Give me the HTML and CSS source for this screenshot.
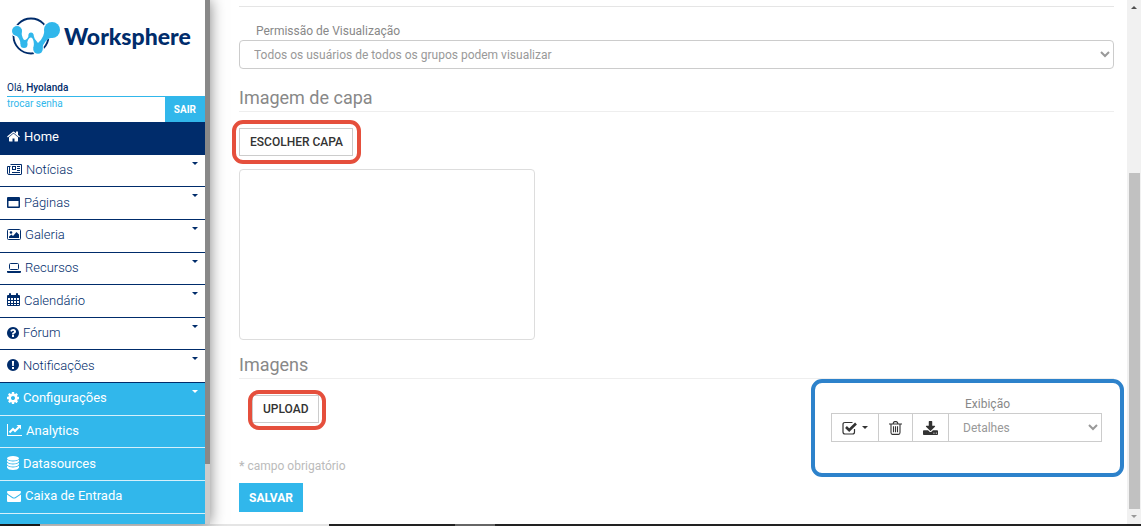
FILE: index.html
```
<!DOCTYPE html>
<html lang="pt-br">
<head>
    <meta charset="UTF-8">
    <meta name="viewport" content="width=device-width, initial-scale=1.0">
    <title>Worksphere - Galeria</title>
    <link rel="stylesheet" href="styles.css">
</head>
<body>

<div class="pagina">
    <aside class="lateral">
        <div class="lateral-conteudo">
            <a href="#" class="logo">
                <svg width="48" height="38" viewBox="0 0 48 38" aria-hidden="true">
                    <circle cx="19" cy="19" r="17.500" fill="none" stroke="#002c6b" stroke-width="1.800"/>
                    <g fill="#fff">
                        <circle cx="5" cy="14" r="6"/>
                        <circle cx="26" cy="32" r="6"/>
                        <circle cx="40" cy="13" r="9.500"/>
                    </g>
                    <path d="M2 17Q8 20 8.500 27L15 28Q15 22 19 20Q23 23 21.500 31L30 33Q31 22 42 20L33 9Q33 20 26 26Q22 22 21 17L17 17Q16 23 12 23Q9 19 9.500 12Z" fill="#31b7eb"/>
                    <circle cx="5" cy="14" r="5" fill="#31b7eb"/>
                    <circle cx="12" cy="27.500" r="3.500" fill="#31b7eb"/>
                    <circle cx="19" cy="18" r="2.500" fill="#31b7eb"/>
                    <circle cx="26" cy="32" r="4.800" fill="#31b7eb"/>
                    <circle cx="40" cy="13" r="8" fill="#31b7eb"/>
                </svg>
                <span>Worksphere</span>
            </a>

            <div class="usuario">
                <div class="saudacao">Olá, <strong>Hyolanda</strong></div>
                <div class="acoes-usuario">
                    <a href="#" class="trocar-senha">trocar senha</a>
                    <button type="button" class="sair">SAIR</button>
                </div>
            </div>

            <nav class="menu">
                <a href="#" class="item ativo">
                    <svg width="13" height="13" viewBox="64 192 1664 1408"><path d="M1472 992v480q0 26-19 45t-45 19h-384v-384h-256v384h-384q-26 0-45-19t-19-45v-480q0-1 .5-3t.5-3l575-474 575 474q1 2 1 6zm223-69l-62 74q-8 9-21 11h-3q-13 0-21-7l-692-577-692 577q-12 8-24 7-13-2-21-11l-62-74q-8-10-7-23.500t11-21.500l719-599q32-26 76-26t76 26l244 204v-195q0-14 9-23t23-9h192q14 0 23 9t9 23v408l219 182q10 8 11 21.500t-7 23.500z"/></svg>
                    Home
                </a>
                <a href="#" class="item sub">
                    <svg width="15" height="13" viewBox="0 0 15 13"><path fill="none" stroke="currentColor" d="M3.500 1.500h11v9.500q0 .5-.5.5H2q-1.500 0-1.500-1.500V3.500h3M2.500 3.500v7"/><path d="M5 3h4v4H5zM10 3h3v1h-3zM10 5h3v1h-3zM10 7h3v1h-3zM5 9h8v1H5z"/><path fill="#fff" d="M6 4h2v2H6z"/></svg>
                    Notícias
                </a>
                <a href="#" class="item sub">
                    <svg width="13" height="13" viewBox="0 0 13 13"><path fill-rule="evenodd" d="M1 1h11q1 0 1 1v9q0 1-1 1H1q-1 0-1-1V2q0-1 1-1zM1.500 5v5.500h10V5z"/></svg>
                    Páginas
                </a>
                <a href="#" class="item sub">
                    <svg width="14" height="13" viewBox="0 0 14 13"><rect x=".5" y="1.500" width="13" height="10" rx="1" fill="none" stroke="currentColor"/><circle cx="4" cy="4.500" r="1.300"/><path d="M2 10V8.500L4.500 6.500 6 8l3.500-4L12 6.500V10z"/></svg>
                    Galeria
                </a>
                <a href="#" class="item sub">
                    <svg width="14" height="13" viewBox="0 0 14 13"><rect x="2.500" y="2.500" width="9" height="6" rx="1" fill="none" stroke="currentColor"/><path d="M0 10h14v1q0 1-1 1H1q-1 0-1-1z"/></svg>
                    Recursos
                </a>
                <a href="#" class="item sub">
                    <svg width="13" height="14" viewBox="0 0 13 14"><path fill-rule="evenodd" d="M1 2h1V1q0-1 1-1t1 1v1h5V1q0-1 1-1t1 1v1h1q1 0 1 1v9q0 1-1 1H1q-1 0-1-1V3q0-1 1-1zM1 5v2h2V5zM4 5v2h2V5zM7 5v2h2V5zM10 5v2h2V5zM1 8v2h2V8zM4 8v2h2V8zM7 8v2h2V8zM10 8v2h2V8zM1 11v1h2v-1zM4 11v1h2v-1zM7 11v1h2v-1zM10 11v1h2v-1z"/></svg>
                    Calendário
                </a>
                <a href="#" class="item sub">
                    <svg width="12" height="12" viewBox="128 128 1536 1536"><path d="M1024 1376v-192q0-14-9-23t-23-9h-192q-14 0-23 9t-9 23v192q0 14 9 23t23 9h192q14 0 23-9t9-23zm256-672q0-88-55.500-163t-138.500-116-170-41q-243 0-371 213-15 24 8 42l132 100q7 6 19 6 16 0 25-12 53-68 86-92 34-24 86-24 48 0 85.500 26t37.500 59q0 38-20 61t-68 45q-63 28-115.500 86.500t-52.500 125.500v36q0 14 9 23t23 9h192q14 0 23-9t9-23q0-19 21.500-49.500t54.500-49.500q32-18 49-28.500t46-35 44.500-48 28-60.500 12.500-81zm384 192q0 209-103 385.500t-279.500 279.500-385.500 103-385.500-103-279.500-279.500-103-385.500 103-385.500 279.500-279.500 385.500-103 385.500 103 279.500 279.500 103 385.500z"/></svg>
                    Fórum
                </a>
                <a href="#" class="item sub">
                    <svg width="12" height="12" viewBox="0 0 12 12"><path fill-rule="evenodd" d="M6 0a6 6 0 1 1 0 12A6 6 0 0 1 6 0zM4.900 2l.3 5h1.600l.3-5zM5 8v2h2V8z"/></svg>
                    Notificações
                </a>
                <a href="#" class="item sub azul">
                    <svg width="12" height="12" viewBox="128 128 1536 1536"><path d="M1152 896q0-106-75-181t-181-75-181 75-75 181 75 181 181 75 181-75 75-181zm512-109v222q0 12-8 23t-20 13l-185 28q-19 54-39 91 35 50 107 138 10 12 10 25t-9 23q-27 37-99 108t-94 71q-12 0-26-9l-138-108q-44 23-91 38-16 136-29 186-7 28-36 28h-222q-14 0-24.500-8.500t-11.500-21.500l-28-184q-49-16-90-37l-141 107q-10 9-25 9-14 0-25-11-126-114-165-168-7-10-7-23 0-12 8-23 15-21 51-66.500t54-70.500q-27-50-41-99l-183-27q-13-2-21-12.500t-8-23.500v-222q0-12 8-23t19-13l186-28q14-46 39-92-40-57-107-138-10-12-10-24 0-10 9-23 26-36 98.500-107.500t94.500-71.500q13 0 26 10l138 107q44-23 91-38 16-136 29-186 7-28 36-28h222q14 0 24.500 8.500t11.500 21.500l28 184q49 16 90 37l142-107q9-9 24-9 13 0 25 10 129 119 165 170 7 8 7 22 0 12-8 23-15 21-51 66.500t-54 70.500q26 50 41 98l183 28q13 2 21 12.500t8 23.500z"/></svg>
                    Configurações
                </a>
                <a href="#" class="item azul">
                    <svg width="15" height="13" viewBox="0 0 15 13"><path d="M0 0h1v11h14v1H0z"/><path d="M2.500 8.500L6 5l2 2 4-4" fill="none" stroke="currentColor" stroke-width="2"/><path d="M9.500 1H14v4.500z"/></svg>
                    Analytics
                </a>
                <a href="#" class="item azul">
                    <svg width="12" height="14" viewBox="0 0 12 14"><ellipse cx="6" cy="2.300" rx="6" ry="2.300"/><path d="M0 3.700Q2 5.500 6 5.500t6-1.800v1.500Q11 7.500 6 7.500T0 5.200zM0 6.700Q2 8.500 6 8.500t6-1.800v1.500q-1 2.300-6 2.300T0 8.200zM0 9.700q2 1.800 6 1.800t6-1.800v1.800Q11 14 6 14t-6-2.500z"/></svg>
                    Datasources
                </a>
                <a href="#" class="item azul">
                    <svg width="14" height="12" viewBox="0 0 14 12"><path d="M1 1h12q1 0 1 1 0 1-1 2L8.500 7Q7 8 5.500 7L1 4Q0 3 0 2q0-1 1-1z"/><path d="M0 4.500L5.500 8.200Q7 9 8.500 8.200L14 4.500V11q0 1-1 1H1q-1 0-1-1z"/></svg>
                    Caixa de Entrada
                </a>
                <span class="item azul cortado"></span>
            </nav>
        </div>
        <div class="rolagem-lateral"><div class="polegar"></div></div>
    </aside>

    <main class="conteudo">
        <form class="formulario">
            <section class="permissao">
                <label for="permissao">Permissão de Visualização</label>
                <select id="permissao">
                    <option>Todos os usuários de todos os grupos podem visualizar</option>
                </select>
            </section>

            <h2>Imagem de capa</h2>
            <div class="destaque destaque-capa">
                <button type="button" class="botao">ESCOLHER CAPA</button>
            </div>
            <div class="capa"></div>

            <h2>Imagens</h2>
            <div class="barra">
                <div class="destaque destaque-upload">
                    <button type="button" class="botao">UPLOAD</button>
                </div>
                <div class="ferramentas">
                    <div class="icones">
                        <button type="button" class="botao-icone" aria-label="Selecionar">
                            <svg width="16" height="14" viewBox="0 0 16 14"><path d="M12.500 8v3q0 2-2 2h-7.500q-2 0-2-2V3.500q0-2 2-2h7.500" fill="none" stroke="currentColor" stroke-width="1.200"/><path d="M4 6l3.200 3.200L14 2.500" fill="none" stroke="currentColor" stroke-width="2.600"/></svg>
                            <span class="seta"></span>
                        </button>
                        <button type="button" class="botao-icone" aria-label="Excluir">
                            <svg width="13" height="14" viewBox="0 0 13 14"><path d="M0 3h13M4 3l.5-1.500Q5 .6 6 .6h1q1 0 1.500.9L9 3M2 3v8.500q0 1.900 1.400 1.900h6.200q1.400 0 1.400-1.900V3M4.500 5.200v6M6.500 5.200v6M8.500 5.200v6" fill="none" stroke="currentColor" stroke-width="1.100"/></svg>
                        </button>
                        <button type="button" class="botao-icone" aria-label="Baixar">
                            <svg width="15" height="14" viewBox="64 0 1664 1536"><path d="M1344 1344q0-26-19-45t-45-19-45 19-19 45 19 45 45 19 45-19 19-45zm256 0q0-26-19-45t-45-19-45 19-19 45 19 45 45 19 45-19 19-45zm128-224v320q0 40-28 68t-68 28h-1472q-40 0-68-28t-28-68v-320q0-40 28-68t68-28h465l135 136q58 56 136 56t136-56l136-136h464q40 0 68 28t28 68zm-325-569q17 41-14 70l-448 448q-18 19-45 19t-45-19l-448-448q-31-29-14-70 17-39 59-39h256v-448q0-26 19-45t45-19h256q26 0 45 19t19 45v448h256q42 0 59 39z"/></svg>
                        </button>
                    </div>
                    <div class="exibicao">
                        <label for="exibicao">Exibição</label>
                        <select id="exibicao">
                            <option>Detalhes</option>
                        </select>
                    </div>
                </div>
            </div>

            <p class="obrigatorio"><strong>*</strong> campo obrigatório</p>
            <button type="submit" class="salvar">SALVAR</button>
        </form>
    </main>

    <div class="rolagem">
        <span class="seta cima"></span>
        <div class="trilho"></div>
        <div class="polegar"></div>
        <span class="seta"></span>
    </div>
</div>
<footer class="rodape"><span></span><span></span><span></span></footer>

</body>
</html>
```
FILE: styles.css
```
* {
    box-sizing: border-box;
}
body {
    margin: 0;
    height: 100vh;
    display: flex;
    flex-direction: column;
    overflow: hidden;
    font-family: Roboto, sans-serif;
    font-size: 12px;
    color: #888;
    background: #fff;
}
button, select {
    font-family: inherit;
    font-size: 12px;
}
a {
    text-decoration: none;
}
svg {
    fill: currentColor;
    flex: none;
}
.pagina {
    flex: 1;
    display: flex;
    min-height: 0;
}

/* menu lateral */
.lateral {
    display: flex;
    flex: none;
    z-index: 1;
    box-shadow: 0 0 14px rgba(0,0,0,0.5);
}
.lateral-conteudo {
    width: 205px;
    display: flex;
    flex-direction: column;
    background: #fff;
    color: #002c6b;
}
.logo {
    display: flex;
    align-items: center;
    gap: 4px;
    padding: 17px 12px 0;
    color: #002c6b;
    font-family: Lato, sans-serif;
    font-size: 23px;
    font-weight: 900;
}
.usuario {
    padding: 25px 0 0 7px;
    font-size: 10px;
}
.saudacao {
    line-height: 16px;
    border-bottom: 1px solid #31b7eb;
}
.saudacao strong {
    font-weight: 500;
}
.acoes-usuario {
    display: flex;
    justify-content: space-between;
    align-items: flex-start;
}
.trocar-senha {
    color: #31b7eb;
    line-height: 14px;
}
.sair {
    border: 0;
    padding: 0 9px;
    height: 25px;
    background: #31b7eb;
    color: #fff;
    font-size: 10px;
    font-weight: 700;
}
.menu {
    flex: 1;
    display: flex;
    flex-direction: column;
}
.item {
    flex: 1;
    display: flex;
    align-items: center;
    gap: 4px;
    padding: 0 7px 2px;
    border-bottom: 1px solid #002c6b;
    color: #002c6b;
    font-size: 13px;
    font-weight: 300;
}
.item.ativo {
    background: #002c6b;
    color: #fff;
    font-weight: 400;
}
.item.azul {
    background: #31b7eb;
    border-color: #d5f0fb;
    color: #fff;
    font-weight: 400;
}
.item.cortado {
    flex: 0.28;
    border: 0;
}
.item.sub::after {
    content: "";
    align-self: flex-start;
    margin: 7px 0 0 auto;
    border: 3px solid transparent;
    border-top-color: currentColor;
    border-bottom: 0;
}
.rolagem-lateral {
    width: 5px;
    background: #ccc;
}
.rolagem-lateral .polegar {
    height: 88.5%;
    background: #888;
}

/* formulario */
.conteudo {
    flex: 1;
    min-width: 0;
    padding: 6px 13px 0 29px;
}
.formulario {
    display: flex;
    flex-direction: column;
    align-items: flex-start;
}
.permissao {
    align-self: stretch;
    padding-top: 16px;
    border-top: 1px solid #e5e5e5;
}
.permissao label {
    display: block;
    padding-left: 17px;
    line-height: 17px;
}
select {
    display: block;
    width: 100%;
    height: 29px;
    padding: 0 0 0 10px;
    border: 1px solid #ccc;
    border-radius: 4px;
    background: #fff;
    color: #999;
}
h2 {
    align-self: stretch;
    margin: 18px 0 16px;
    padding-bottom: 2px;
    border-bottom: 1px solid #eee;
    line-height: 22px;
    font-size: 18px;
    font-weight: 400;
}
.botao {
    display: block;
    height: 28px;
    padding: 0 9px 0 10px;
    border: 1px solid #ccc;
    background: #fff;
    color: #333;
    font-weight: 500;
}
.destaque {
    position: relative;
}
.destaque::after, .ferramentas::after {
    content: "";
    position: absolute;
    border: 4px solid #e54f3c;
    border-radius: 11px;
    pointer-events: none;
}
.destaque-capa::after {
    inset: -8px -8px -8px -7px;
}
.destaque-upload {
    margin-left: 13px;
}
.destaque-upload::after {
    inset: -5px -7px -7px -4px;
}
.capa {
    width: 296px;
    height: 171px;
    margin-top: 13px;
    border: 1px solid #ddd;
    border-radius: 4px;
}
.capa + h2 {
    margin-top: 14px;
}
.barra {
    align-self: stretch;
    display: flex;
    justify-content: space-between;
    align-items: flex-start;
}
.ferramentas {
    position: relative;
    display: flex;
    align-items: flex-end;
    margin-right: 12px;
}
.ferramentas::after {
    inset: -16px -22px -35px -20px;
    border-color: #2d82cb;
}
.icones {
    display: flex;
}
.botao-icone {
    display: flex;
    align-items: center;
    gap: 4px;
    height: 29px;
    padding: 0 10px;
    border: 1px solid #ccc;
    border-right-width: 0;
    background: #fff;
    color: #333;
}
.seta {
    border: 3px solid transparent;
    border-top-color: currentColor;
    border-bottom: 0;
}
.seta.cima {
    border-top: 0;
    border-bottom: 3px solid #505050;
}
.exibicao {
    width: 154px;
}
.exibicao label {
    display: block;
    padding-left: 17px;
    line-height: 18px;
}
.exibicao select {
    border-radius: 0;
}
.obrigatorio {
    margin: 16px 0 9px;
    line-height: 16px;
    color: #bbb;
}
.salvar {
    height: 29px;
    padding: 0 10px;
    border: 0;
    background: #31b7eb;
    color: #fff;
    font-weight: 700;
}

/* rolagem da pagina */
.rolagem {
    width: 14px;
    flex: none;
    display: flex;
    flex-direction: column;
    align-items: center;
    padding: 6px 0;
    background: #f1f1f1;
    color: #999;
}
.rolagem .trilho {
    flex: 164;
}
.rolagem .polegar {
    flex: 337;
    width: 11px;
    margin-bottom: 6px;
    background: #c1c1c1;
}
.rodape {
    display: flex;
    height: 2px;
    background: #222;
}
.rodape span:nth-child(1) {
    width: 40px;
}
.rodape span:nth-child(2) {
    width: 289px;
    background: #e5e5e5;
}
.rodape span:nth-child(3) {
    width: 40px;
    margin-left: 126px;
    background: #666;
}
```
